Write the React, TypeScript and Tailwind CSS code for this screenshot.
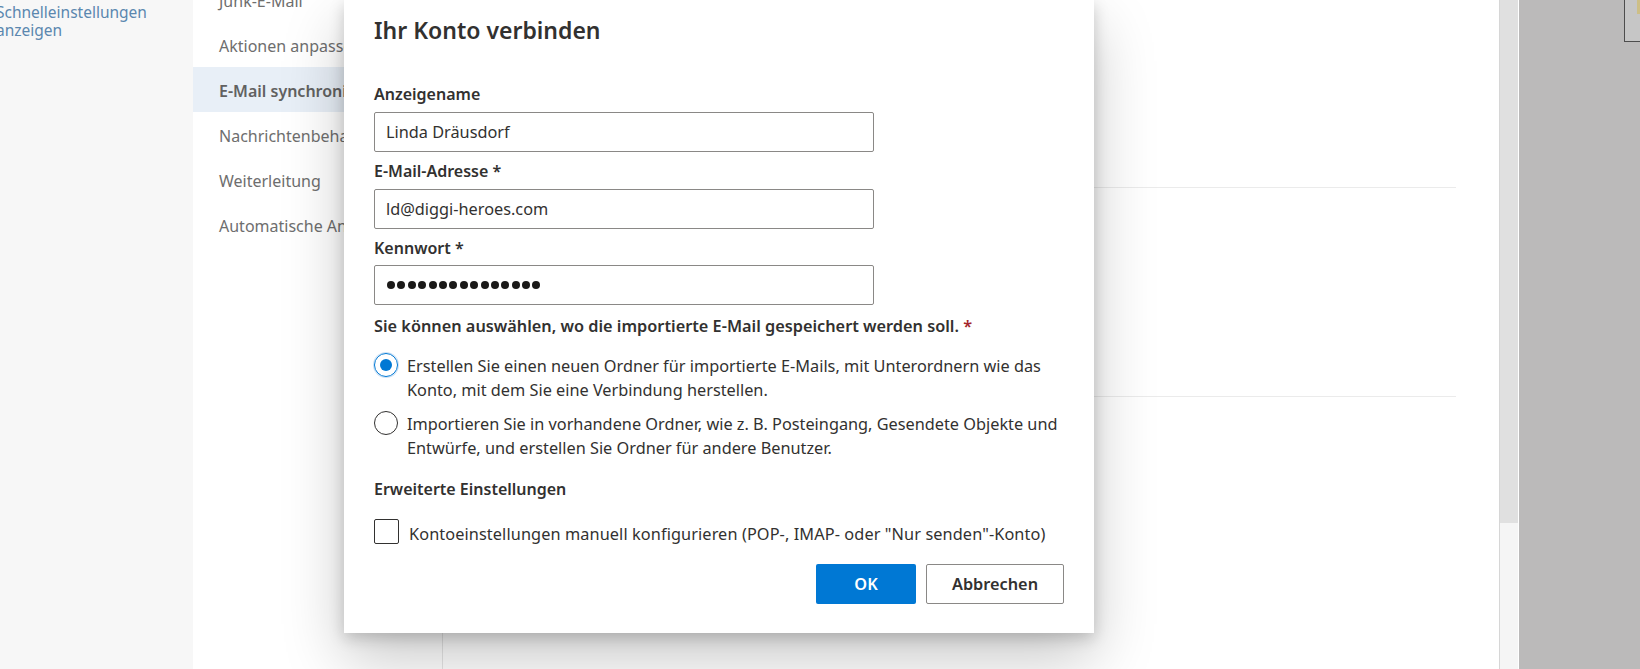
import React from 'react';

const menuItems = [
  'Junk-E-Mail',
  'Aktionen anpassen',
  'E-Mail synchronisieren',
  'Nachrichtenbehandlung',
  'Weiterleitung',
  'Automatische Antworten',
];

const Field = ({ label, value }: { label: string; value: string }) => (
  <>
    <div className="mt-[7px] text-base font-semibold leading-6">{label}</div>
    <input
      readOnly
      value={value}
      className="mt-[6px] h-[40px] w-[500px] rounded-[2px] border border-[#8a8886] px-[11px] text-[16.3px] text-[#323130] outline-none"
    />
  </>
);

const Radio = ({ checked, lines }: { checked?: boolean; lines: [string, string] }) => (
  <div className="flex items-start">
    <div
      className={
        checked
          ? 'flex h-[24px] w-[24px] shrink-0 items-center justify-center rounded-full border border-[#0078d4] shadow-[0_0_0_1px_#cfe2f5]'
          : 'h-[24px] w-[24px] shrink-0 rounded-full border border-[#323130]'
      }
    >
      {checked && <div className="h-[12px] w-[12px] rounded-full bg-[#0078d4]" />}
    </div>
    <div className="ml-[9px] mt-px whitespace-nowrap text-[16.3px] leading-6">
      {lines[0]}
      <br />
      {lines[1]}
    </div>
  </div>
);

const ConnectDialog = () => {
  return (
    <div className="absolute left-[344px] top-0 w-[750px] bg-white px-[30px] pb-[29px] pt-[14px] shadow-[0_25.6px_57.6px_0_rgba(0,0,0,0.22),0_4.8px_14.4px_0_rgba(0,0,0,0.18)]">
      <h2 className="text-[23px] font-semibold leading-[32px]">Ihr Konto verbinden</h2>

      <div className="mt-[36px]" />
      <Field label="Anzeigename" value="Linda Dräusdorf" />
      <Field label="E-Mail-Adresse *" value="ld@diggi-heroes.com" />

      <div className="mt-[7px] text-base font-semibold leading-6">Kennwort *</div>
      <div className="mt-[5px] flex h-[40px] w-[500px] items-center gap-[2.4px] rounded-[2px] border border-[#8a8886] px-[12px]">
        {Array.from({ length: 15 }).map((_, i) => (
          <span key={i} className="h-[8px] w-[8px] rounded-full bg-[#1b1a19]" />
        ))}
      </div>

      <div className="mt-[9px] text-[16.3px] font-semibold leading-6">
        Sie können auswählen, wo die importierte E-Mail gespeichert werden soll.{' '}
        <span className="text-[#a4262c]">*</span>
      </div>

      <div className="mt-[15px] flex flex-col gap-[9px]">
        <Radio
          checked
          lines={[
            'Erstellen Sie einen neuen Ordner für importierte E-Mails, mit Unterordnern wie das',
            'Konto, mit dem Sie eine Verbindung herstellen.',
          ]}
        />
        <Radio
          lines={[
            'Importieren Sie in vorhandene Ordner, wie z. B. Posteingang, Gesendete Objekte und',
            'Entwürfe, und erstellen Sie Ordner für andere Benutzer.',
          ]}
        />
      </div>

      <div className="mt-[17px] text-base font-semibold leading-6">Erweiterte Einstellungen</div>

      <div className="mt-[18px] flex items-start">
        <div className="h-[25px] w-[25px] shrink-0 rounded-[2px] border border-[#323130]" />
        <div className="ml-[10px] mt-[3px] whitespace-nowrap text-[16.3px] leading-6 tracking-[0.1px]">
          Kontoeinstellungen manuell konfigurieren (POP-, IMAP- oder &quot;Nur senden&quot;-Konto)
        </div>
      </div>

      <div className="mt-[18px] flex justify-end gap-[10px]">
        <button className="h-[40px] w-[100px] rounded-[2px] bg-[#0078d4] text-[16.3px] font-semibold text-white">
          OK
        </button>
        <button className="h-[40px] w-[138px] rounded-[2px] border border-[#8a8886] bg-white text-[16.3px] font-semibold text-[#323130]">
          Abbrechen
        </button>
      </div>
    </div>
  );
};

export default function App() {
  return (
    <div className="relative flex h-[669px] w-[1640px] overflow-hidden bg-white font-['Noto_Sans',sans-serif] text-[#323130]">
      <aside className="w-[193px] shrink-0 bg-[#f7f7f7] pt-[3px] text-[15.5px] leading-[18px] text-[#5b87af]">
        <div className="-ml-[4px]">
          Schnelleinstellungen
          <br />
          anzeigen
        </div>
      </aside>

      <nav className="-mt-[23px] w-[250px] shrink-0 border-r border-[#e6e6e6] bg-white">
        {menuItems.map((item, i) => (
          <div
            key={item}
            className={
              i === 2
                ? 'flex h-[45px] items-center whitespace-nowrap bg-[#e8eff7] pl-[26px] pt-[2px] text-base font-semibold text-[#616161]'
                : 'flex h-[45px] items-center whitespace-nowrap pl-[26px] pt-[2px] text-base text-[#6e6e6e]'
            }
          >
            {item}
          </div>
        ))}
      </nav>

      <main className="flex flex-1 flex-col bg-white">
        <div className="ml-[40px] mr-[43px] h-[188px] border-b border-[#ebebeb]" />
        <div className="ml-[40px] mr-[43px] h-[209px] border-b border-[#ebebeb]" />
      </main>

      <div className="flex w-[20px] shrink-0 flex-col border-l border-r border-l-[#d6d6d6] border-r-white">
        <div className="h-[523px] bg-[#e0e0e0]" />
        <div className="flex-1 bg-[#f5f5f5]" />
      </div>

      <div className="flex w-[121px] shrink-0 items-start justify-end bg-[#bbbaba]">
        <div className="flex h-[42px] w-[16px] justify-end border-b border-l border-[#4d4d4d] bg-[#c6c6c6]">
          <div className="h-[14px] w-[3px] bg-[#cdbf86]" />
        </div>
      </div>

      <ConnectDialog />
    </div>
  );
}
